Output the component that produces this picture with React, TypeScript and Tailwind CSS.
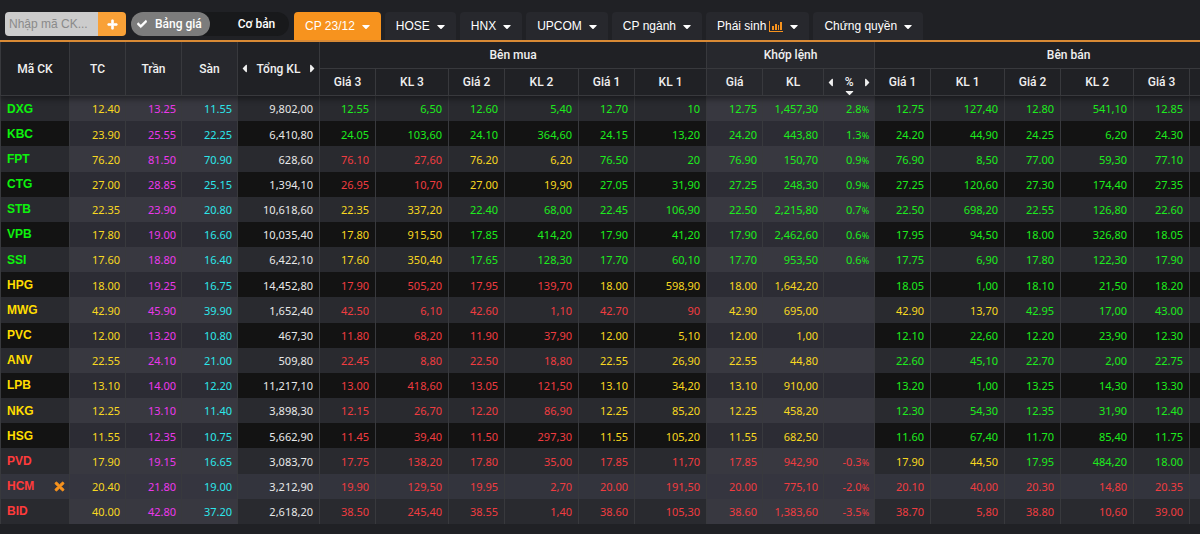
import { Fragment } from 'react'
import { clsx } from 'clsx'
import {
  FaCaretDown,
  FaCaretLeft,
  FaCaretRight,
  FaCheck,
  FaPlus,
} from 'react-icons/fa'

type Quote = {
  symbol: string
  ref: string
  ceil: string
  floor: string
  total: string
  buy: [string, string][]
  match: [string, string, string]
  sell: [string, string][]
}

const raw = `DXG|12.40|13.25|11.55|9,802,00|12.55|6,50|12.60|5,40|12.70|10|12.75|1,457,30|2.8|12.75|127,40|12.80|541,10|12.85
KBC|23.90|25.55|22.25|6,410,80|24.05|103,60|24.10|364,60|24.15|13,20|24.20|443,80|1.3|24.20|44,90|24.25|6,20|24.30
FPT|76.20|81.50|70.90|628,60|76.10|27,60|76.20|6,20|76.50|20|76.90|150,70|0.9|76.90|8,50|77.00|59,30|77.10
CTG|27.00|28.85|25.15|1,394,10|26.95|10,70|27.00|19,90|27.05|31,90|27.25|248,30|0.9|27.25|120,60|27.30|174,40|27.35
STB|22.35|23.90|20.80|10,618,60|22.35|337,20|22.40|68,00|22.45|106,90|22.50|2,215,80|0.7|22.50|698,20|22.55|126,80|22.60
VPB|17.80|19.00|16.60|10,035,40|17.80|915,50|17.85|414,20|17.90|41,20|17.90|2,462,60|0.6|17.95|94,50|18.00|326,80|18.05
SSI|17.60|18.80|16.40|6,422,10|17.60|350,40|17.65|128,30|17.70|60,10|17.70|953,50|0.6|17.75|6,90|17.80|122,30|17.90
HPG|18.00|19.25|16.75|14,452,80|17.90|505,20|17.95|139,70|18.00|598,90|18.00|1,642,20||18.05|1,00|18.10|21,50|18.20
MWG|42.90|45.90|39.90|1,652,40|42.50|6,10|42.60|1,10|42.70|90|42.90|695,00||42.90|13,70|42.95|17,00|43.00
PVC|12.00|13.20|10.80|467,30|11.80|68,20|11.90|37,90|12.00|5,10|12.00|1,00||12.10|22,60|12.20|23,90|12.30
ANV|22.55|24.10|21.00|509,80|22.45|8,80|22.50|18,80|22.55|26,90|22.55|44,80||22.60|45,10|22.70|2,00|22.75
LPB|13.10|14.00|12.20|11,217,10|13.00|418,60|13.05|121,50|13.10|34,20|13.10|910,00||13.20|1,00|13.25|14,30|13.30
NKG|12.25|13.10|11.40|3,898,30|12.15|26,70|12.20|86,90|12.25|85,20|12.25|458,20||12.30|54,30|12.35|31,90|12.40
HSG|11.55|12.35|10.75|5,662,90|11.45|39,40|11.50|297,30|11.55|105,20|11.55|682,50||11.60|67,40|11.70|85,40|11.75
PVD|17.90|19.15|16.65|3,083,70|17.75|138,20|17.80|35,00|17.85|11,70|17.85|942,90|-0.3|17.90|44,50|17.95|484,20|18.00
HCM|20.40|21.80|19.00|3,212,90|19.90|129,50|19.95|2,70|20.00|191,50|20.00|775,10|-2.0|20.10|40,00|20.30|14,80|20.35
BID|40.00|42.80|37.20|2,618,20|38.50|245,40|38.55|1,40|38.60|105,30|38.60|1,383,60|-3.5|38.70|5,80|38.80|10,60|39.00`

const quotes: Quote[] = raw.split('\n').map((line) => {
  const c = line.split('|')
  return {
    symbol: c[0],
    ref: c[1],
    ceil: c[2],
    floor: c[3],
    total: c[4],
    buy: [
      [c[5], c[6]],
      [c[7], c[8]],
      [c[9], c[10]],
    ],
    match: [c[11], c[12], c[13]],
    sell: [
      [c[14], c[15]],
      [c[16], c[17]],
      [c[18], ''],
    ],
  }
})

const activeSymbol = 'HCM'

const columns = [
  'w-[70px]',
  'w-[56px]',
  'w-[56px]',
  'w-[56px]',
  'w-[82px]',
  'w-[56px]',
  'w-[73px]',
  'w-[56px]',
  'w-[74px]',
  'w-[56px]',
  'w-[72px]',
  'w-[56px]',
  'w-[61px]',
  'w-[51px]',
  'w-[56px]',
  'w-[74px]',
  'w-[56px]',
  'w-[73px]',
  'w-[56px]',
  'w-[73px]',
]

const tabs = [
  { label: 'CP 23/12', active: true },
  { label: 'HOSE' },
  { label: 'HNX' },
  { label: 'UPCOM' },
  { label: 'CP ngành' },
  { label: 'Phái sinh', chart: true },
  { label: 'Chứng quyền' },
]

// green above the reference price, yellow at it, red below
function priceColor(price: string, ref: string) {
  const diff = parseFloat(price) - parseFloat(ref)
  if (diff > 0) return 'text-[#1dec1d]'
  if (diff < 0) return 'text-[#f03c40]'
  return 'text-[#f8d820]'
}

function symbolColor(price: string, ref: string) {
  const diff = parseFloat(price) - parseFloat(ref)
  if (diff > 0) return 'text-[#0df20d]'
  if (diff < 0) return 'text-[#ff3b3b]'
  return 'text-[#ffdd00]'
}

function ChartIcon() {
  return (
    <svg viewBox="0 0 14 11" className="h-[11px] w-[14px] fill-[#f7931e]" aria-hidden="true">
      <path d="M0 0h1v10h13v1H0zM3 5h2v4H3zM6 3h2v6H6zM9 4h1v5H9zM11 1h2v8h-2z" />
    </svg>
  )
}

function Toolbar() {
  return (
    <div className="flex items-end border-b-2 border-[#d98a35] pt-3 pl-[5px]">
      <form className="mb-1 flex h-6 shrink-0" onSubmit={(e) => e.preventDefault()}>
        <input
          type="text"
          aria-label="Nhập mã CK"
          placeholder="Nhập mã CK..."
          className="w-[93px] rounded-l-sm bg-[#cccccc] px-1 font-['Liberation_Sans',sans-serif] text-xs text-[#333] outline-none placeholder:text-[#8a8a8a]"
        />
        <button
          type="submit"
          aria-label="Thêm mã"
          className="flex w-7 items-center justify-center rounded-r-sm bg-[#f9a137] text-white"
        >
          <FaPlus className="size-[11px] stroke-white stroke-[30]" />
        </button>
      </form>

      <div className="mb-1 ml-[5px] flex h-6 shrink-0 rounded-full bg-[#18191b] text-xs font-medium text-white">
        <button
          type="button"
          aria-pressed="true"
          className="flex w-[79px] items-center gap-2 rounded-full bg-[#7c7c7c] pl-[6px] whitespace-nowrap"
        >
          <FaCheck className="size-[10px] stroke-white stroke-[30]" />
          Bảng giá
        </button>
        <button type="button" aria-pressed="false" className="w-[79px] pl-[14px]">
          Cơ bản
        </button>
      </div>

      <nav className="ml-[5px] flex gap-1">
        {tabs.map((tab) => (
          <button
            key={tab.label}
            type="button"
            className={clsx(
              "flex h-7 items-center rounded-t-sm px-[11px] font-['Liberation_Sans',sans-serif] text-xs whitespace-nowrap text-white",
              tab.active ? 'bg-[#f7931e]' : 'bg-[#27282d]'
            )}
          >
            {tab.label}
            {tab.chart && (
              <span className="ml-[3px]">
                <ChartIcon />
              </span>
            )}
            <FaCaretDown className="ml-[7px] h-[13px] w-2" />
          </button>
        ))}
      </nav>
    </div>
  )
}

const th = 'border-r border-b border-[#38393d] p-0 font-medium'

function LevelHead({ level }: { level: string }) {
  return (
    <>
      <th className={th}>Giá {level}</th>
      <th className={th}>KL {level}</th>
    </>
  )
}

function ColumnSwitch({ label }: { label: string }) {
  return (
    <div className="flex items-center justify-between px-1">
      <button type="button" aria-label="Cột trước">
        <FaCaretLeft className="h-[13px] w-[5px]" />
      </button>
      {label}
      <button type="button" aria-label="Cột sau">
        <FaCaretRight className="h-[13px] w-[5px]" />
      </button>
    </div>
  )
}

function BoardHead() {
  return (
    <thead className="relative z-10 bg-[#202125] text-xs text-[#f0f0f0] shadow-[0_3px_6px_rgba(0,0,0,0.4)]">
      <tr className="h-[27px]">
        <th rowSpan={2} className={clsx(th, 'border-l')}>
          Mã CK
        </th>
        <th rowSpan={2} className={clsx(th, 'bg-[#27282d]')}>
          TC
        </th>
        <th rowSpan={2} className={clsx(th, 'bg-[#27282d]')}>
          Trần
        </th>
        <th rowSpan={2} className={clsx(th, 'bg-[#27282d]')}>
          Sàn
        </th>
        <th rowSpan={2} className={th}>
          <ColumnSwitch label="Tổng KL" />
        </th>
        <th colSpan={6} className={th}>
          Bên mua
        </th>
        <th colSpan={3} className={clsx(th, 'bg-[#27282d]')}>
          Khớp lệnh
        </th>
        <th colSpan={6} className={th}>
          Bên bán
        </th>
      </tr>
      <tr className="h-[27px]">
        <LevelHead level="3" />
        <LevelHead level="2" />
        <LevelHead level="1" />
        <th className={clsx(th, 'bg-[#27282d]')}>Giá</th>
        <th className={clsx(th, 'bg-[#27282d]')}>KL</th>
        <th className={clsx(th, 'relative bg-[#27282d]')}>
          <ColumnSwitch label="%" />
          <FaCaretDown className="absolute inset-x-0 -bottom-1 mx-auto size-[13px]" />
        </th>
        <LevelHead level="1" />
        <LevelHead level="2" />
        <th className={th}>Giá 3</th>
        <th className={th} />
      </tr>
    </thead>
  )
}

function BoardRow({ quote }: { quote: Quote }) {
  const active = quote.symbol === activeSymbol
  const [price, volume, change] = quote.match
  const cell = 'border-r border-[#38393d] pt-[2px] pb-0 pl-0'
  const td = clsx(cell, 'pr-[6px]')
  const shaded = clsx(
    cell,
    'pr-[5px]',
    active ? 'bg-[#35353f]' : 'bg-[#2c2c34] group-odd:bg-[#383840]'
  )
  const matchColor = priceColor(price, quote.ref)

  return (
    <tr
      className={clsx(
        'group',
        active ? 'bg-[#33343d]' : 'bg-[#131313] odd:bg-[#292a2f]'
      )}
    >
      <th
        scope="row"
        className="border-x border-[#38393d] py-0 pr-[3px] pl-[6px] text-left font-['Liberation_Sans',sans-serif] text-xs font-bold"
      >
        <div className="flex items-center justify-between">
          <a href={`#${quote.symbol}`} className={symbolColor(price, quote.ref)}>
            {quote.symbol}
          </a>
          {active && (
            <button type="button" aria-label="Xóa HCM" className="text-[#f7931e]">
              <FaPlus className="size-[13px] rotate-45 stroke-[#f7931e] stroke-[30]" />
            </button>
          )}
        </div>
      </th>
      <td className={clsx(shaded, 'text-[#f8d820]')}>{quote.ref}</td>
      <td className={clsx(shaded, 'text-[#ec38ec]')}>{quote.ceil}</td>
      <td className={clsx(shaded, 'text-[#2ce6ea]')}>{quote.floor}</td>
      <td className={clsx(td, 'text-[#e8e8e8]')}>{quote.total}</td>
      {quote.buy.map(([p, v], i) => (
        <Fragment key={i}>
          <td className={clsx(td, priceColor(p, quote.ref))}>{p}</td>
          <td className={clsx(td, priceColor(p, quote.ref))}>{v}</td>
        </Fragment>
      ))}
      <td className={clsx(shaded, matchColor)}>{price}</td>
      <td className={clsx(shaded, matchColor)}>{volume}</td>
      <td className={clsx(shaded, matchColor)}>
        {change}
        {change && <span className="text-[9px]">%</span>}
      </td>
      {quote.sell.map(([p, v], i) => (
        <Fragment key={i}>
          <td className={clsx(td, priceColor(p, quote.ref))}>{p}</td>
          <td className={clsx(td, priceColor(p, quote.ref))}>{v}</td>
        </Fragment>
      ))}
    </tr>
  )
}

export default function App() {
  return (
    <main className="min-h-screen bg-[#202125] font-[Roboto,'Liberation_Sans',sans-serif]">
      <Toolbar />
      <div className="overflow-x-auto [scrollbar-width:none]">
        <table className="h-[calc(100vh-52px)] w-full min-w-[1263px] table-fixed border-separate border-spacing-0">
          <colgroup>
            {columns.map((width, i) => (
              <col key={i} className={width} />
            ))}
          </colgroup>
          <BoardHead />
          <tbody className="text-right font-['Noto_Sans',sans-serif] text-[11px]">
            {quotes.map((quote) => (
              <BoardRow key={quote.symbol} quote={quote} />
            ))}
          </tbody>
        </table>
      </div>
    </main>
  )
}
